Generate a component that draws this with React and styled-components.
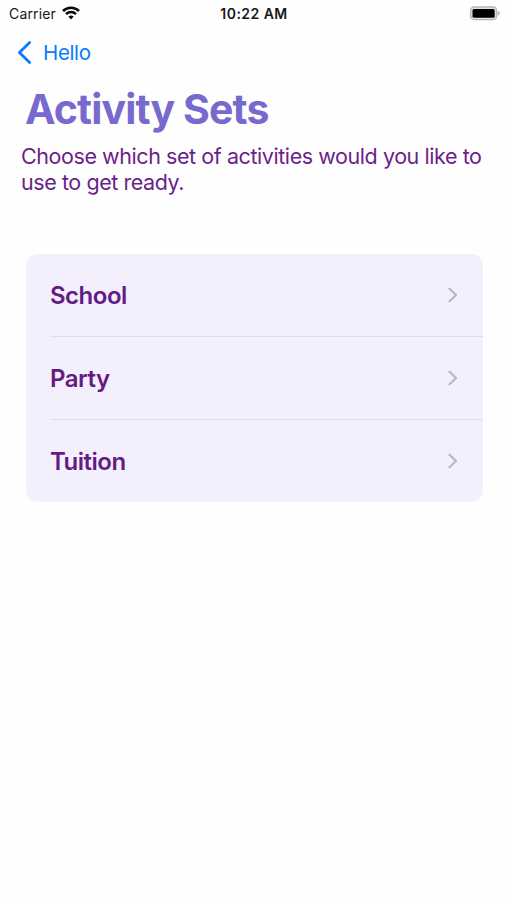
import React from "react"
import styled, { createGlobalStyle } from "styled-components"

const GlobalStyle = createGlobalStyle`
*{
    box-sizing:border-box;
}
body{
    margin:0;
    background:#fefefe;
    font-family:Inter, "Liberation Sans", sans-serif;
}
`

const Screen = styled.main`
width:507px;
height:900px;
overflow:hidden;
`

const StatusBar = styled.div`
height:27px;
padding:0 7px 0 9px;
display:grid;
grid-template-columns:1fr auto 1fr;
align-items:center;
color:#171717;
font-size:14px;
line-height:27px;
`

const Carrier = styled.div`
display:flex;
align-items:center;
gap:6px;
svg{
    display:block;
    margin-top:-2px;
}
`

const CarrierName = styled.span`
width:47px;
white-space:nowrap;
letter-spacing:0.15px;
`

const Time = styled.div`
padding-right:1px;
font-weight:600;
letter-spacing:0.45px;
`

const Battery = styled.svg`
display:block;
justify-self:end;
`

const NavBar = styled.nav`
height:50px;
padding:0 17px;
display:flex;
align-items:center;
`

const BackButton = styled.button`
display:flex;
align-items:center;
gap:11px;
padding:0;
border:0;
background:none;
color:#0a7aff;
font-family:inherit;
font-size:20.5px;
line-height:26px;
letter-spacing:-0.35px;
span{
    padding-top:2px;
}
`

const Header = styled.header`
height:176.5px;
padding:7px 20px 0 21px;
`

const Title = styled.h1`
margin:0 0 8.6px 4px;
color:#7869cf;
font-size:41px;
line-height:50px;
font-weight:700;
letter-spacing:-0.87px;
white-space:nowrap;
`

const Intro = styled.p`
margin:0;
color:#6b1f8a;
font-size:21.5px;
line-height:26.4px;
letter-spacing:-0.43px;
white-space:nowrap;
`

const List = styled.ul`
width:457px;
margin:0 0 0 25.7px;
padding:0;
border-radius:12px;
background:#f3effd;
list-style:none;
overflow:hidden;
`

const Row = styled.li`
height:${(props) => (props.$last ? "82px" : "83px")};
margin-left:24.3px;
padding-right:25px;
display:flex;
align-items:center;
justify-content:space-between;
border-bottom:${(props) => (props.$last ? "0" : "1px solid #e0dbea")};
color:#661a86;
font-size:24px;
font-weight:600;
letter-spacing:-0.5px;
span{
    padding-top:1.5px;
}
`

const sets = ["School", "Party", "Tuition"]

function WifiIcon() {
    return (
        <svg width="18" height="14" viewBox="0 0 18 14" fill="none" stroke="#080808" strokeWidth="2.5">
            <path d="M1 5 C5.4 .6 12.6 .6 17 5" />
            <path d="M4 8.1 C6.8 5.4 11.2 5.4 14 8.1" />
            <path d="M6.4 10.6 Q9 8.5 11.6 10.6 L9 13.4 Z" fill="#080808" stroke="none" />
        </svg>
    )
}

function BatteryIcon() {
    return (
        <Battery width="31" height="15" viewBox="0 0 31 15">
            <rect x="1.6" y="1" width="26" height="12.6" rx="3.6" fill="#e4e4e4" stroke="#b5b5b5" strokeWidth="1.3" />
            <rect x="3.5" y="3" width="22.2" height="8.7" rx="1.5" fill="#000" />
            <path d="M28.9 5 Q30.8 5.6 30.8 7.3 Q30.8 9 28.9 9.6 Z" fill="#b5b5b5" />
        </Battery>
    )
}

export default function App() {
    return (
        <>
        <GlobalStyle />
        <Screen>
            <StatusBar>
                <Carrier>
                    <CarrierName>Carrier</CarrierName>
                    <WifiIcon />
                </Carrier>
                <Time>10:22 AM</Time>
                <BatteryIcon />
            </StatusBar>
            <NavBar>
                <BackButton>
                    <svg width="15" height="25" viewBox="0 0 15 25" fill="none" stroke="currentColor" strokeWidth="2.8" strokeLinecap="round" strokeLinejoin="round">
                        <path d="M12.6 2.5 L2.4 12.5 L12.6 22.5" />
                    </svg>
                    <span>Hello</span>
                </BackButton>
            </NavBar>
            <Header>
                <Title>Activity Sets</Title>
                <Intro>Choose which set of activities would you like to<br />use to get ready.</Intro>
            </Header>
            <List>
                {sets.map((name, i) => (
                    <Row key={name} $last={i === sets.length - 1}>
                        <span>{name}</span>
                        <svg width="10" height="16" viewBox="0 0 10 16" fill="none" stroke="#bbb7c4" strokeWidth="2.2" strokeLinecap="round" strokeLinejoin="round">
                            <path d="M1.5 1.7 L8 8 L1.5 14.3" />
                        </svg>
                    </Row>
                ))}
            </List>
        </Screen>
        </>
    )
}
